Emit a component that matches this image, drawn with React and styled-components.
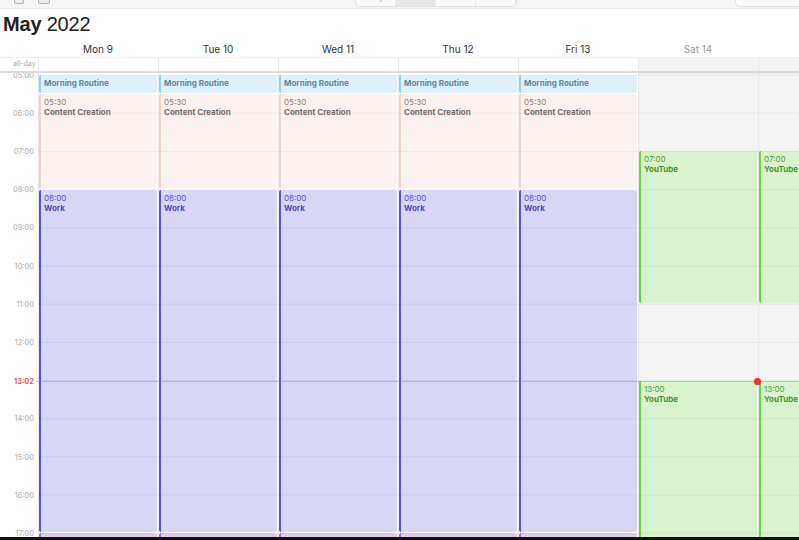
import React from 'react'
import styled, { createGlobalStyle } from 'styled-components'

const HOUR = 38.2
const START = 5
const OFFSET = 1.5
const toY = (t) => OFFSET + (t - START) * HOUR

const GlobalStyle = createGlobalStyle`
  html, body {
    margin: 0;
    padding: 0;
    background: #ffffff;
  }
  body {
    font-family: Inter, "Noto Sans", "Liberation Sans", sans-serif;
    -webkit-font-smoothing: antialiased;
  }
`

const colors = {
  blue: { bg: '#def0fb', bar: '#93d2f3', time: '#6a97b0', title: '#5a88a3' },
  salmon: { bg: '#fbf1ee', bar: '#f3d2c8', time: '#8d817e', title: '#7b6d6a' },
  purple: { bg: '#d7d6f5', bar: '#5a4fe3', time: '#5b50d8', title: '#4f45c9' },
  pink: { bg: '#e2c8ee', bar: '#b45ad8', time: '#9b49be', title: '#8a3cad' },
  green: { bg: '#d8f3cd', bar: '#66d93c', time: '#4fa334', title: '#44952a' },
}

const days = [
  { label: 'Mon 9' },
  { label: 'Tue 10' },
  { label: 'Wed 11' },
  { label: 'Thu 12' },
  { label: 'Fri 13' },
  { label: 'Sat 14', weekend: true },
  { label: 'Sun 15', weekend: true },
]

const weekdayEvents = [
  { start: 5, end: 5.5, title: 'Morning Routine', color: 'blue', noTime: true },
  { start: 5.5, end: 8, time: '05:30', title: 'Content Creation', color: 'salmon' },
  { start: 8, end: 17, time: '08:00', title: 'Work', color: 'purple' },
  { start: 17, end: 18, time: '17:00', title: 'Reading', color: 'pink' },
]

const weekendEvents = [
  { start: 7, end: 11, time: '07:00', title: 'YouTube', color: 'green' },
  { start: 13, end: 19, time: '13:00', title: 'YouTube', color: 'green' },
]

const hours = [5, 6, 7, 8, 9, 10, 11, 12, 14, 15, 16, 17]
const NOW = 13 + 2 / 60

export default function App() {
  return (
    <>
      <GlobalStyle />
      <Page>
        <Toolbar>
          <ToolbarInner>
            <WindowIcons>
              <WinIcon />
              <WinIcon wide />
            </WindowIcons>
            <Segmented>
              {['Day', 'Week', 'Month', 'Year'].map((s) => (
                <Segment key={s} active={s === 'Week'}>{s}</Segment>
              ))}
            </Segmented>
            <Search>
              <svg width="9" height="9" viewBox="0 0 10 10">
                <circle cx="4" cy="4" r="3" fill="none" stroke="#999" strokeWidth="1.2" />
                <path d="M6.3 6.3 L9 9" stroke="#999" strokeWidth="1.2" />
              </svg>
              <span>Search</span>
            </Search>
          </ToolbarInner>
        </Toolbar>

        <Title>
          <b>May</b> 2022
        </Title>

        <HeaderRow>
          <span />
          {days.map((d) => (
            <DayHead key={d.label} weekend={d.weekend}>{d.label}</DayHead>
          ))}
        </HeaderRow>

        <AllDayRow>
          <AllDayLabel>all-day</AllDayLabel>
          {days.map((d) => (
            <AllDayCell key={d.label} weekend={d.weekend} />
          ))}
        </AllDayRow>

        <Body>
          <Gutter>
            {hours.map((h) => (
              <HourLabel key={h} style={{ top: toY(h) }}>
                {String(h).padStart(2, '0')}:00
              </HourLabel>
            ))}
            <NowLabel style={{ top: toY(NOW) }}>13:02</NowLabel>
          </Gutter>
          {days.map((d) => (
            <DayColumn key={d.label} weekend={d.weekend}>
              {(d.weekend ? weekendEvents : weekdayEvents).map((e, i) => (
                <Event
                  key={i}
                  tone={colors[e.color]}
                  style={{ top: toY(e.start) + 0.5, height: (e.end - e.start) * HOUR - 1 }}
                >
                  {!e.noTime && <EventTime>{e.time}</EventTime>}
                  <EventTitle>{e.title}</EventTitle>
                </Event>
              ))}
            </DayColumn>
          ))}
          <GridLines />
          <NowLine style={{ top: Math.round(toY(NOW)) }}>
            <NowDot />
          </NowLine>
        </Body>
        <BottomEdge />
      </Page>
    </>
  )
}

const Page = styled.div`
  width: 799px;
  height: 540px;
  display: flex;
  flex-direction: column;
  overflow: hidden;
  background: #fff;
`

const Toolbar = styled.div`
  height: 8px;
  flex: none;
  background: #f5f5f5;
  border-bottom: 1px solid #ececec;
  overflow: hidden;
`

const ToolbarInner = styled.div`
  height: 22px;
  margin-top: -15px;
  display: flex;
  align-items: center;
  padding: 0 0 0 14px;
`

const WindowIcons = styled.div`
  display: flex;
  gap: 14px;
  width: 341px;
`

const WinIcon = styled.div`
  width: ${(p) => (p.wide ? 10 : 8)}px;
  height: 14px;
  border: 1px solid #b9b9b9;
  border-radius: 2px;
  background: #ececec;
`

const Segmented = styled.div`
  display: flex;
  height: 20px;
  border-radius: 5px;
  background: #fbfbfb;
  border: 1px solid #e2e2e2;
  overflow: hidden;
`

const Segment = styled.div`
  width: 39px;
  display: flex;
  align-items: center;
  justify-content: center;
  font-size: 9px;
  color: #a5a5a5;
  background: ${(p) => (p.active ? '#e6e6e6' : 'transparent')};
  border-right: 1px solid #ececec;
`

const Search = styled.div`
  margin-left: auto;
  width: 55px;
  height: 20px;
  display: flex;
  align-items: center;
  gap: 4px;
  padding-left: 8px;
  border: 1px solid #e2e2e2;
  border-right: none;
  border-radius: 5px 0 0 5px;
  background: #fbfbfb;
  font-size: 9px;
  color: #bdbdbd;
`

const Title = styled.div`
  height: 31px;
  flex: none;
  display: flex;
  align-items: center;
  padding-left: 3px;
  font-family: "Liberation Sans", Arial, sans-serif;
  font-size: 20px;
  letter-spacing: -0.2px;
  color: #222;
  white-space: pre;
  b {
    font-weight: 700;
  }
`

const gridCols = `grid-template-columns: 38px repeat(7, 120px);`

const HeaderRow = styled.div`
  display: grid;
  ${gridCols}
  height: 17px;
  flex: none;
  align-items: center;
`

const DayHead = styled.div`
  text-align: center;
  font-size: 10px;
  color: ${(p) => (p.weekend ? '#9a9a9a' : '#333')};
  white-space: nowrap;
`

const AllDayRow = styled.div`
  display: grid;
  ${gridCols}
  height: 13px;
  flex: none;
  border-top: 1px solid #efefef;
  border-bottom: 2px solid #dadada;
`

const AllDayLabel = styled.div`
  font-size: 7px;
  color: #b0b0b0;
  padding: 1px 0 0 13px;
`

const AllDayCell = styled.div`
  border-left: 1px solid #e8e8e8;
  background: ${(p) => (p.weekend ? '#f3f3f3' : '#fff')};
`

const Body = styled.div`
  flex: 1;
  position: relative;
  display: grid;
  ${gridCols}
  overflow: hidden;
`

const Gutter = styled.div`
  position: relative;
`

const HourLabel = styled.div`
  position: absolute;
  right: 4px;
  transform: translateY(-50%);
  font-size: 7.5px;
  color: #ababab;
`

const NowLabel = styled(HourLabel)`
  color: #f2454a;
  font-weight: 600;
`

const DayColumn = styled.div`
  position: relative;
  border-left: 1px solid #e8e8e8;
  background: ${(p) => (p.weekend ? '#f3f3f3' : '#fff')};
`

const Event = styled.div`
  position: absolute;
  left: 0;
  right: 1px;
  box-sizing: border-box;
  background: ${(p) => p.tone.bg};
  border-left: 2.5px solid ${(p) => p.tone.bar};
  border-radius: 2px;
  padding: 3px 0 0 3px;
  overflow: hidden;
  font-size: 8px;
  line-height: 10px;
  span:first-child {
    color: ${(p) => p.tone.time};
  }
  strong {
    color: ${(p) => p.tone.title};
  }
`

const EventTime = styled.span`
  display: block;
  font-weight: 400;
`

const EventTitle = styled.strong`
  display: block;
  font-weight: 700;
  white-space: nowrap;
`

const GridLines = styled.div`
  position: absolute;
  left: 38px;
  right: 0;
  top: 0;
  bottom: 0;
  pointer-events: none;
  background-repeat: repeat-y;
  background-position: 0 ${OFFSET}px;
  background-image: repeating-linear-gradient(
    to bottom,
    rgba(0, 0, 0, 0.05) 0px,
    rgba(0, 0, 0, 0.05) 1px,
    transparent 1px,
    transparent ${HOUR}px
  );
  background-size: 100% ${HOUR}px;
`

const NowLine = styled.div`
  position: absolute;
  left: 36px;
  right: 0;
  height: 1px;
  background: rgba(250, 90, 120, 0.42);
`

const NowDot = styled.div`
  position: absolute;
  left: 718px;
  top: -3px;
  width: 7px;
  height: 7px;
  border-radius: 50%;
  background: #f5322f;
`

const BottomEdge = styled.div`
  height: 3px;
  flex: none;
  background: #111;
`
